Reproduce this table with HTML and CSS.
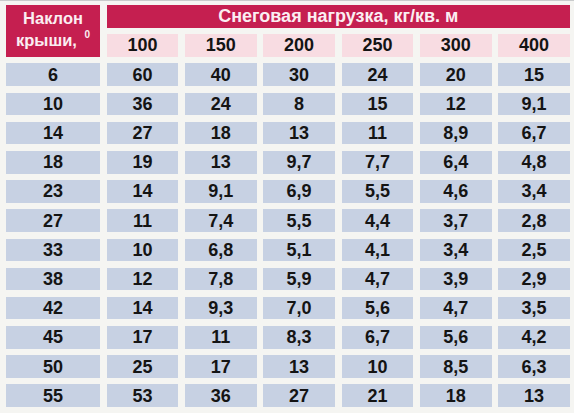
FILE: index.html
```html
<!DOCTYPE html>
<html lang="ru">
<head>
<meta charset="utf-8">
<title>Снеговая нагрузка</title>
<link rel="stylesheet" href="styles.css">
</head>
<body>
<div class="table">
  <div class="cell head angle"><span class="angle-text">Наклон<br>крыши, <sup>0</sup></span></div>
  <div class="cell head title">Снеговая нагрузка, кг/кв. м</div>
  <div class="cell sub">100</div>
  <div class="cell sub">150</div>
  <div class="cell sub">200</div>
  <div class="cell sub">250</div>
  <div class="cell sub">300</div>
  <div class="cell sub">400</div>

  <div class="cell">6</div><div class="cell">60</div><div class="cell">40</div><div class="cell">30</div><div class="cell">24</div><div class="cell">20</div><div class="cell">15</div>
  <div class="cell">10</div><div class="cell">36</div><div class="cell">24</div><div class="cell">8</div><div class="cell">15</div><div class="cell">12</div><div class="cell">9,1</div>
  <div class="cell">14</div><div class="cell">27</div><div class="cell">18</div><div class="cell">13</div><div class="cell">11</div><div class="cell">8,9</div><div class="cell">6,7</div>
  <div class="cell">18</div><div class="cell">19</div><div class="cell">13</div><div class="cell">9,7</div><div class="cell">7,7</div><div class="cell">6,4</div><div class="cell">4,8</div>
  <div class="cell">23</div><div class="cell">14</div><div class="cell">9,1</div><div class="cell">6,9</div><div class="cell">5,5</div><div class="cell">4,6</div><div class="cell">3,4</div>
  <div class="cell">27</div><div class="cell">11</div><div class="cell">7,4</div><div class="cell">5,5</div><div class="cell">4,4</div><div class="cell">3,7</div><div class="cell">2,8</div>
  <div class="cell">33</div><div class="cell">10</div><div class="cell">6,8</div><div class="cell">5,1</div><div class="cell">4,1</div><div class="cell">3,4</div><div class="cell">2,5</div>
  <div class="cell">38</div><div class="cell">12</div><div class="cell">7,8</div><div class="cell">5,9</div><div class="cell">4,7</div><div class="cell">3,9</div><div class="cell">2,9</div>
  <div class="cell">42</div><div class="cell">14</div><div class="cell">9,3</div><div class="cell">7,0</div><div class="cell">5,6</div><div class="cell">4,7</div><div class="cell">3,5</div>
  <div class="cell">45</div><div class="cell">17</div><div class="cell">11</div><div class="cell">8,3</div><div class="cell">6,7</div><div class="cell">5,6</div><div class="cell">4,2</div>
  <div class="cell">50</div><div class="cell">25</div><div class="cell">17</div><div class="cell">13</div><div class="cell">10</div><div class="cell">8,5</div><div class="cell">6,3</div>
  <div class="cell">55</div><div class="cell">53</div><div class="cell">36</div><div class="cell">27</div><div class="cell">21</div><div class="cell">18</div><div class="cell">13</div>
</div>
</body>
</html>
```

FILE: styles.css
```css
html, body {
  margin: 0;
  padding: 0;
}
body {
  width: 574px;
  height: 413px;
  box-sizing: border-box;
  padding: 4px 4px 0 6px;
  background: #f5f5f2;
  border-top: 1px solid #c9cbcc;
  font-family: "Liberation Sans", Arial, sans-serif;
  font-weight: bold;
  overflow: hidden;
}
.table {
  display: grid;
  grid-template-columns: 94px repeat(6, 1fr);
  grid-template-rows: repeat(14, 22.6px);
  gap: 6.6px;
}
.cell {
  background: #c7d1e3;
  color: #141414;
  font-size: 18px;
  display: flex;
  align-items: center;
  justify-content: center;
  line-height: 1;
}
.head {
  background: #c51f50;
  color: #fbeef2;
  font-size: 18px;
}
.angle {
  grid-row: span 2;
  font-size: 16.5px;
}
.angle-text {
  display: block;
  text-align: center;
  line-height: 22px;
  margin-bottom: 3px;
}
.angle sup {
  font-size: 10px;
  vertical-align: 8px;
  line-height: 0;
  margin-left: 3px;
}
.title {
  grid-column: 2 / span 6;
}
.sub {
  background: #f8dce2;
}
```
